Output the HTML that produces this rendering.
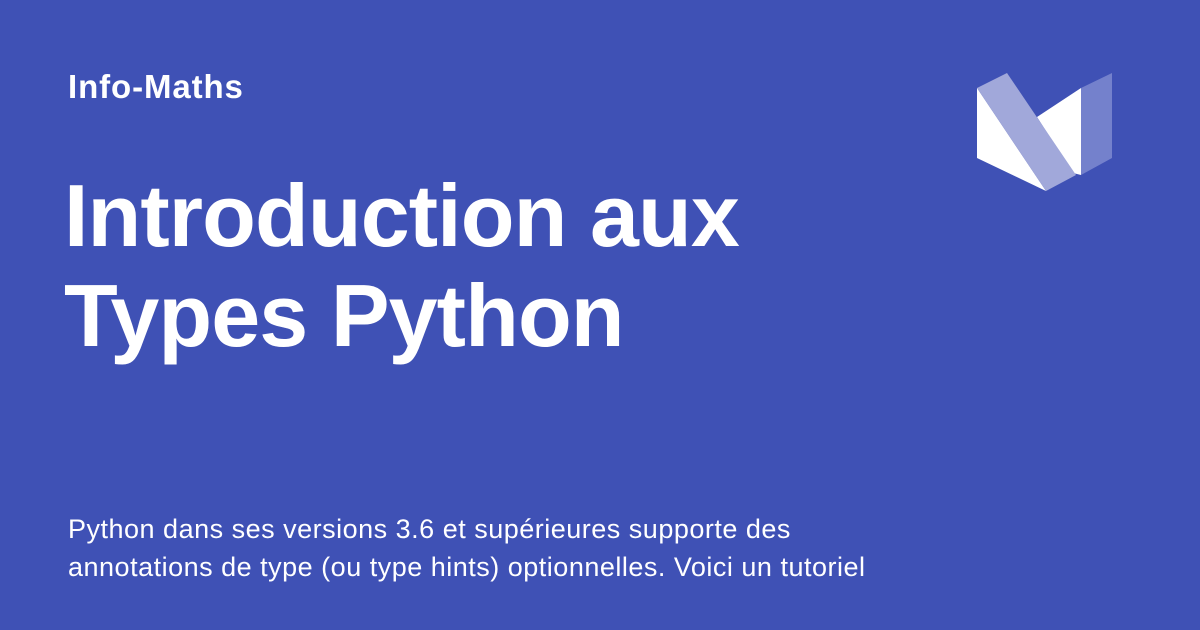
<!DOCTYPE html><html><head><style>
body{margin:0;width:1200px;height:630px;background:#3f51b5;overflow:hidden;font-family:"Liberation Sans",sans-serif;color:#fff;position:relative}
.s{position:absolute;left:68px;top:68px;font-size:33px;font-weight:bold;letter-spacing:0.9px}
.t{position:absolute;left:64px;top:166px;font-size:88px;font-weight:bold;line-height:100px;letter-spacing:-0.9px}
.d{position:absolute;left:68px;top:510px;font-size:27px;line-height:38px;letter-spacing:0.5px}
svg{position:absolute;left:0;top:0}
</style></head><body>
<svg width="1200" height="630">
<polygon points="977,88 1046,191 977,158" fill="#fff"/>
<polygon points="1037,117 1081,88 1081,175 1073,173" fill="#fff"/>
<polygon points="977,88 1007,73 1076,175 1046,191" fill="#a1a8da"/>
<polygon points="1081,88 1112,73 1112,158 1081,175" fill="#7481cc"/>
</svg>
<div class="s">Info-Maths</div>
<div class="t">Introduction aux<br>Types Python</div>
<div class="d">Python dans ses versions 3.6 et supérieures supporte des<br>annotations de type (ou type hints) optionnelles. Voici un tutoriel</div>
</body></html>
